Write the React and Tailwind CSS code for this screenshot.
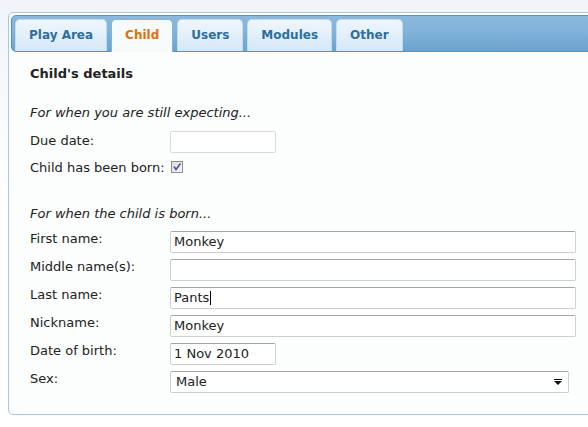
const tabs = ["Play Area", "Child", "Users", "Modules", "Other"]

const Tab = ({ label, active }) => (
  <div
    className={
      active
        ? "relative z-10 h-[33px] rounded-t-[5px] border border-b-0 border-[#79b7e7] bg-[#f7fafb] px-[13px] pt-[8px] text-[12px] leading-[14px] font-bold text-[#e17009]"
        : "h-[32px] rounded-t-[5px] border border-b-0 border-[#c5dbec] bg-gradient-to-b from-[#eef6fd] to-[#d6e8f7] px-[13px] pt-[8px] text-[12px] leading-[14px] font-bold text-[#2e6e9e]"
    }
  >
    {label}
  </div>
)

const Field = ({ label, value, wide = true, cursor }) => (
  <div className="mt-[6px] flex items-start first:mt-0">
    <div className="w-[140px] shrink-0 leading-4">{label}</div>
    <div
      className={`flex h-[22px] items-center rounded-[2px] border border-[#cfcfcf] border-t-[#a4a4a4] bg-white pl-[3px] leading-4 ${
        wide ? "w-[406px]" : "w-[106px]"
      }`}
    >
      {value}
      {cursor && <span className="ml-px inline-block h-[14px] w-px bg-black" />}
    </div>
  </div>
)

const Checkbox = () => (
  <svg width="12" height="12" viewBox="0 0 12 12" className="mt-px">
    <defs>
      <linearGradient id="cb" x1="0" y1="0" x2="1" y2="1">
        <stop offset="0" stopColor="#dcdcdc" />
        <stop offset="1" stopColor="#f7f7f7" />
      </linearGradient>
    </defs>
    <rect x="0.5" y="0.5" width="11" height="11" fill="url(#cb)" stroke="#8e8f8f" />
    <path d="M3 5.5 L5 8.5 L9.5 2.5" fill="none" stroke="#4b57a8" strokeWidth="1.6" />
  </svg>
)

export default function App() {
  return (
    <div className="h-[427px] w-[588px] overflow-hidden bg-gradient-to-b from-[#f1f4fa] via-white to-white font-['DejaVu_Sans',sans-serif] text-[13px] text-[#222]">
      <div className="ml-[8px] mt-[12px] w-[600px] rounded-[5px] border border-[#a6c9e2] bg-[#fcfdfd] p-[2px]">
        <div className="flex h-[37px] items-start gap-[4px] rounded-[5px] border border-[#4297d7] bg-gradient-to-b from-[#8cb9dd] via-[#80b1d8] to-[#6aa3d0] px-[3px] pt-[3px]">
          {tabs.map((t) => (
            <Tab key={t} label={t} active={t === "Child"} />
          ))}
        </div>

        <div className="pb-[19px] pl-[19px] pt-[14px]">
          <div className="leading-4 font-bold">Child's details</div>

          <div className="mt-[23px] leading-4 italic">For when you are still expecting...</div>

          <div className="mt-[10px] flex items-start">
            <div className="w-[140px] shrink-0 pt-[2px] leading-4">Due date:</div>
            <div className="h-[22px] w-[106px] rounded-[2px] border border-[#dadae2] bg-white" />
          </div>

          <div className="mt-[7px] flex items-start">
            <div className="w-[140px] shrink-0 leading-4 whitespace-nowrap">Child has been born:</div>
            <div className="ml-px">
              <Checkbox />
            </div>
          </div>

          <div className="mt-[30px] leading-4 italic">For when the child is born...</div>

          <div className="mt-[9px]">
            <Field label="First name:" value="Monkey" />
            <Field label="Middle name(s):" value="" />
            <Field label="Last name:" value="Pants" cursor />
            <Field label="Nickname:" value="Monkey" />
            <Field label="Date of birth:" value="1 Nov 2010" wide={false} />
            <div className="mt-[6px] flex items-start">
              <div className="w-[140px] shrink-0 leading-4">Sex:</div>
              <div className="flex h-[22px] w-[399px] items-center justify-between rounded-[2px] border border-[#cfcfcf] border-t-[#a4a4a4] bg-white pl-[5px] pr-[6px] leading-4">
                <span>Male</span>
                <svg width="8" height="6" viewBox="0 0 8 6">
                  <rect x="0" y="0" width="8" height="1" fill="#111" />
                  <path d="M0 2 H8 L4 6 Z" fill="#111" />
                </svg>
              </div>
            </div>
          </div>
        </div>
      </div>
    </div>
  )
}
